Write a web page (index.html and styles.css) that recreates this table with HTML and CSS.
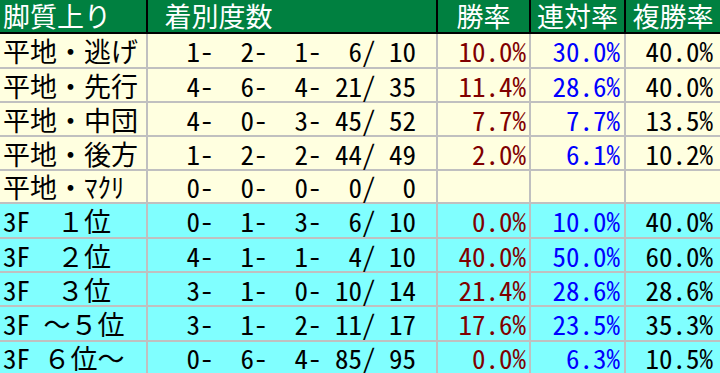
FILE: index.html
```html
<!DOCTYPE html>
<html lang="ja">
<head>
<meta charset="utf-8">
<title>脚質上り</title>
<link rel="stylesheet" href="styles.css">
</head>
<body>
<div class="tbl">
  <div class="c h l">脚質上り</div>
  <div class="c h l hn"> 着別度数</div>
  <div class="c h m">勝率</div>
  <div class="c h m">連対率</div>
  <div class="c h m">複勝率</div>

  <div class="c y l">平地・逃げ</div>
  <div class="c y r n">1-  2-  1-  6/ 10</div>
  <div class="c y r p1">10.0%</div>
  <div class="c y r p2">30.0%</div>
  <div class="c y r p3">40.0%</div>

  <div class="c y l">平地・先行</div>
  <div class="c y r n">4-  6-  4- 21/ 35</div>
  <div class="c y r p1">11.4%</div>
  <div class="c y r p2">28.6%</div>
  <div class="c y r p3">40.0%</div>

  <div class="c y l">平地・中団</div>
  <div class="c y r n">4-  0-  3- 45/ 52</div>
  <div class="c y r p1">7.7%</div>
  <div class="c y r p2">7.7%</div>
  <div class="c y r p3">13.5%</div>

  <div class="c y l">平地・後方</div>
  <div class="c y r n">1-  2-  2- 44/ 49</div>
  <div class="c y r p1">2.0%</div>
  <div class="c y r p2">6.1%</div>
  <div class="c y r p3">10.2%</div>

  <div class="c y l">平地・ﾏｸﾘ</div>
  <div class="c y r n">0-  0-  0-  0/  0</div>
  <div class="c y r p1"></div>
  <div class="c y r p2"></div>
  <div class="c y r p3"></div>

  <div class="c b l">3F　１位</div>
  <div class="c b r n">0-  1-  3-  6/ 10</div>
  <div class="c b r p1">0.0%</div>
  <div class="c b r p2">10.0%</div>
  <div class="c b r p3">40.0%</div>

  <div class="c b l">3F　２位</div>
  <div class="c b r n">4-  1-  1-  4/ 10</div>
  <div class="c b r p1">40.0%</div>
  <div class="c b r p2">50.0%</div>
  <div class="c b r p3">60.0%</div>

  <div class="c b l">3F　３位</div>
  <div class="c b r n">3-  1-  0- 10/ 14</div>
  <div class="c b r p1">21.4%</div>
  <div class="c b r p2">28.6%</div>
  <div class="c b r p3">28.6%</div>

  <div class="c b l">3F ～５位</div>
  <div class="c b r n">3-  1-  2- 11/ 17</div>
  <div class="c b r p1">17.6%</div>
  <div class="c b r p2">23.5%</div>
  <div class="c b r p3">35.3%</div>

  <div class="c b l last">3F ６位～</div>
  <div class="c b r n last">0-  6-  4- 85/ 95</div>
  <div class="c b r p1 last">0.0%</div>
  <div class="c b r p2 last">6.3%</div>
  <div class="c b r p3 last">10.5%</div>
</div>
</body>
</html>
```
FILE: styles.css
```css
html, body {
  margin: 0;
  padding: 0;
  background: #ffffff;
}

body {
  height: 373px;
  overflow: hidden;
}

.tbl {
  display: grid;
  width: 720px;
  grid-template-columns: 148px 290px 93px 95px 94px;
  grid-template-rows: 34px 35px 34px 34px 34px 33px 35px 34px 34px 35px 31px;
  font-family: "Noto Sans Mono CJK JP", "Noto Sans CJK JP", monospace;
  font-size: 27px;
  line-height: 28px;
}

.c {
  box-sizing: border-box;
  display: flex;
  align-items: center;
  white-space: pre;
  border-right: 2px solid #c0c0c0;
  border-bottom: 2px solid #c0c0c0;
  padding-top: 1px;
  color: #000000;
}

.c:nth-child(5n) {
  border-right: 0;
}

.last {
  border-bottom: 0;
}

.h {
  background: #008040;
  color: #ffffff;
  border-color: #000000;
  padding-top: 0;
}

.y {
  background: #ffffe0;
}

.b {
  background: #80ffff;
}

.l {
  justify-content: flex-start;
  padding-left: 3px;
}

.hn {
  padding-left: 3px;
}

.m {
  justify-content: center;
}

.r {
  justify-content: flex-end;
}

.n {
  padding-right: 20px;
}

.p1 {
  color: #800000;
  padding-right: 3px;
}

.p2 {
  color: #0000ff;
  padding-right: 4px;
}

.p3 {
  color: #000000;
  padding-right: 7px;
}
```
